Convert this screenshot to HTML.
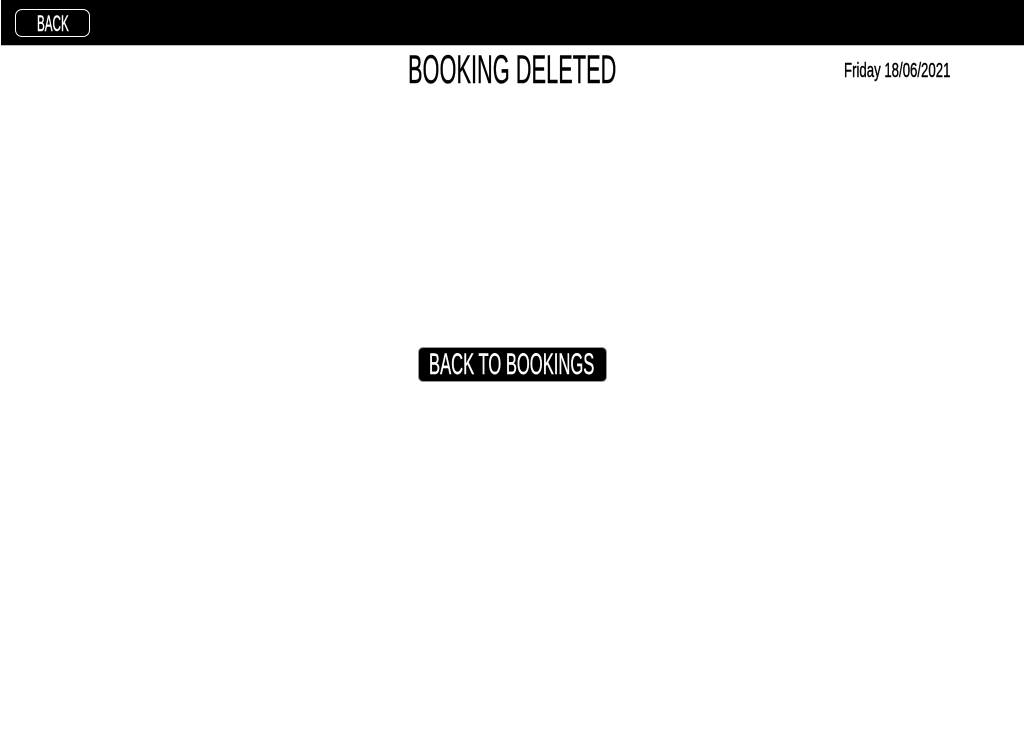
<!DOCTYPE html>
<html><head><meta charset="utf-8"><style>
html,body{margin:0;padding:0;width:1024px;height:729px;background:#fff;overflow:hidden;position:relative;font-family:"Liberation Sans",sans-serif;}
.t{position:absolute;white-space:nowrap;line-height:1;transform-origin:left top;-webkit-text-stroke:0.4px currentColor;}
#hdr{position:absolute;left:1px;top:0;width:1023px;height:45px;background:#000;border-bottom:1px solid #bbb;}
#back{position:absolute;left:15px;top:9px;width:73px;height:26px;border:1px solid #fff;border-radius:7px;}
#btb{position:absolute;left:418px;top:347px;width:187px;height:33px;background:#000;border:1px solid #999;border-radius:5px;}
</style></head><body>
<div id="hdr"></div>
<div id="back"></div>
<span class="t" style="left:37px;top:13px;font-size:22px;color:#fff;transform:scaleX(.53)">BACK</span>
<span class="t" style="left:408px;top:50px;font-size:40px;color:#000;transform:scaleX(.545)">BOOKING DELETED</span>
<span class="t" style="left:844px;top:61px;font-size:20px;color:#000;transform:scaleX(.66)">Friday 18/06/2021</span>
<div id="btb"></div>
<span class="t" style="left:429px;top:350px;font-size:30px;color:#fff;transform:scaleX(.553)">BACK TO BOOKINGS</span>
</body></html>
